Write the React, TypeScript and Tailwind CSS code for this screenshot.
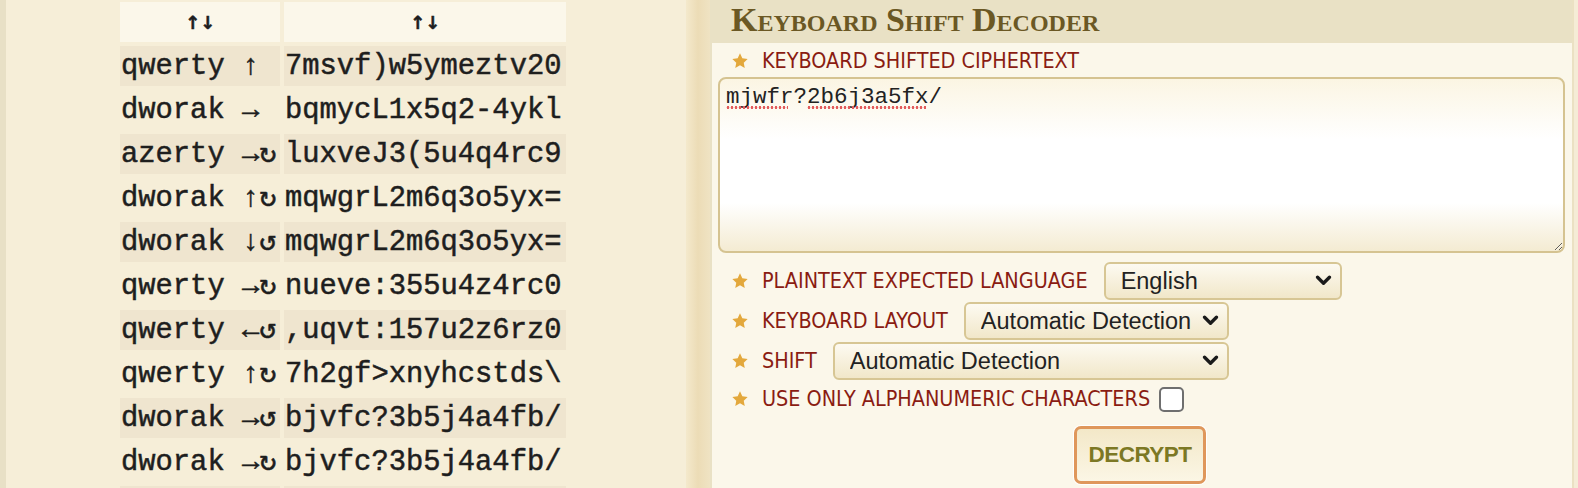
const rows: [string, string][] = [
  ["qwerty ↑", "7msvf)w5ymeztv20"],
  ["dworak →", "bqmycL1x5q2-4ykl"],
  ["azerty →↻", "luxveJ3(5u4q4rc9"],
  ["dworak ↑↻", "mqwgrL2m6q3o5yx="],
  ["dworak ↓↺", "mqwgrL2m6q3o5yx="],
  ["qwerty →↻", "nueve:355u4z4rc0"],
  ["qwerty ←↺", ",uqvt:157u2z6rz0"],
  ["qwerty ↑↻", "7h2gf>xnyhcstds\\"],
  ["dworak →↺", "bjvfc?3b5j4a4fb/"],
  ["dworak →↻", "bjvfc?3b5j4a4fb/"],
  ["", ""],
];

function Star() {
  return (
    <svg viewBox="0 0 24 24" className="w-[18px] h-[18px] shrink-0 blur-[0.4px]">
      <path
        d="M12 1.8l3.1 6.6 7.1.9-5.2 4.9 1.3 7.1L12 17.8l-6.3 3.5 1.3-7.1-5.2-4.9 7.1-.9z"
        fill="#e3a83c"
      />
    </svg>
  );
}

function Label({ children }: { children: React.ReactNode }) {
  return (
    <span className="font-['Liberation_Sans_Narrow','DejaVu_Sans_Condensed','Liberation_Sans',sans-serif] text-[21.4px] leading-none text-[#8a1c12] whitespace-nowrap">
      {children}
    </span>
  );
}

function Chevron() {
  return (
    <svg
      viewBox="0 0 18 12"
      className="pointer-events-none absolute right-[10px] top-[13px] w-[17px] h-[11px]"
      fill="none"
      stroke="#1a1a1a"
      strokeWidth={3.6}
      strokeLinecap="round"
      strokeLinejoin="round"
    >
      <polyline points="2.5,2.5 9,9 15.5,2.5" />
    </svg>
  );
}

function Select({ value, options, width }: { value: string; options: string[]; width: string }) {
  return (
    <div className={`relative ${width}`}>
      <select
        defaultValue={value}
        className="w-full h-[38px] appearance-none rounded-[6px] border-2 border-[#d7c694] bg-gradient-to-b from-[#fdfaf1] to-[#f1e7c9] pl-[15px] pr-[34px] font-['Liberation_Sans',Arial,sans-serif] text-[23.5px] text-[#222] outline-none"
      >
        {options.map((o) => (
          <option key={o}>{o}</option>
        ))}
      </select>
      <Chevron />
    </div>
  );
}

export default function App() {
  return (
    <div className="w-[1578px] h-[488px] overflow-hidden flex bg-[#f5edd6]">
      <div className="w-[6px] bg-[#e8e0c6]" />

      {/* results table */}
      <div className="w-[680px] bg-[#f6eed8] pl-[114px] pt-[2px]">
        <div className="grid grid-cols-[160px_282px] gap-[4px] font-['Liberation_Mono','DejaVu_Sans_Mono',monospace] text-[28.8px] text-[#1e1e1e] [-webkit-text-stroke:0.5px_#1e1e1e]">
          <div className="h-[40px] bg-[#fbf7ea] flex items-center justify-center font-['DejaVu_Sans',sans-serif] font-bold text-[18px]">
            ↑↓
          </div>
          <div className="h-[40px] bg-[#fbf7ea] flex items-center justify-center font-['DejaVu_Sans',sans-serif] font-bold text-[18px]">
            ↑↓
          </div>
          {rows.map(([layout, text], i) => (
            <div key={i} className="contents">
              <div
                className={`h-[40px] flex items-center pl-[1px] pt-[2px] whitespace-pre ${
                  i % 2 === 0 ? "bg-[#efe5cf]" : ""
                }`}
              >
                {layout}
              </div>
              <div
                className={`h-[40px] flex items-center pl-[1px] pt-[2px] whitespace-pre ${
                  i % 2 === 0 ? "bg-[#efe5cf]" : ""
                }`}
              >
                {text}
              </div>
            </div>
          ))}
        </div>
      </div>

      <div className="w-[24px] bg-gradient-to-r from-[#f4e9cc] via-[#ecdcb6] to-[#efe3c3]" />

      {/* decoder panel */}
      <div className="w-[862px] bg-[#e9e1c5] flex flex-col">
        <div className="h-[43px] shrink-0 pl-[21px]">
          <h1 className="font-['Liberation_Serif','Times_New_Roman',serif] font-bold text-[34px] leading-[40px] text-[#6b5824] [font-variant-caps:small-caps]">
            Keyboard Shift Decoder
          </h1>
        </div>

        <div className="flex-1 ml-[2px] bg-[#fbf7ea] flex flex-col">
          <div className="h-[34px] flex items-center gap-[13px] pl-[19px] pt-[2px]">
            <Star />
            <Label>KEYBOARD SHIFTED CIPHERTEXT</Label>
          </div>

          <div className="relative ml-[6px] mr-[7px] h-[176px]">
            <textarea
              defaultValue="mjwfr?2b6j3a5fx/"
              spellCheck={false}
              className="w-full h-full block rounded-[8px] border-2 border-[#d5c391] bg-[linear-gradient(to_bottom,#fbf5e3_0%,#ffffff_35%,#ffffff_72%,#f4ebd2_100%)] px-[6px] pt-[5px] font-['Liberation_Mono','DejaVu_Sans_Mono',monospace] text-[22.5px] leading-[26px] text-[#222] outline-none"
            />
            {/* spellcheck marks */}
            <div className="pointer-events-none absolute left-[8px] top-[29px] w-[62px] h-[3px] bg-[radial-gradient(circle,#e25c5c_1.2px,transparent_1.6px)] bg-[length:4px_3px]" />
            <div className="pointer-events-none absolute left-[89px] top-[29px] w-[119px] h-[3px] bg-[radial-gradient(circle,#e25c5c_1.2px,transparent_1.6px)] bg-[length:4px_3px]" />
          </div>

          <div className="mt-[9px] flex flex-col gap-[2px] pl-[19px]">
            <div className="h-[38px] flex items-center gap-[13px]">
              <Star />
              <Label>PLAINTEXT EXPECTED LANGUAGE</Label>
              <Select value="English" options={["English", "French", "German", "Spanish"]} width="ml-[3px] w-[238px]" />
            </div>
            <div className="h-[38px] flex items-center gap-[13px]">
              <Star />
              <Label>KEYBOARD LAYOUT</Label>
              <Select
                value="Automatic Detection"
                options={["Automatic Detection", "QWERTY", "AZERTY", "DVORAK"]}
                width="ml-[3px] w-[265px]"
              />
            </div>
            <div className="h-[38px] flex items-center gap-[13px]">
              <Star />
              <Label>SHIFT</Label>
              <Select
                value="Automatic Detection"
                options={["Automatic Detection", "Up", "Down", "Left", "Right"]}
                width="ml-[3px] w-[396px]"
              />
            </div>
            <div className="h-[34px] flex items-center gap-[13px]">
              <Star />
              <Label>USE ONLY ALPHANUMERIC CHARACTERS</Label>
              <input
                type="checkbox"
                className="-ml-[4px] w-[25px] h-[25px] appearance-none rounded-[5px] border-2 border-[#6f6f6f] bg-white"
              />
            </div>
          </div>

          <div className="mt-[10px] flex justify-center pr-[4px]">
            <button className="w-[132px] h-[58px] rounded-[7px] border-[3px] border-[#df975b] ring-1 ring-white bg-gradient-to-b from-[#f3e8c8] to-[#fbf6e5] font-['Liberation_Sans',Arial,sans-serif] font-bold text-[22.5px] tracking-[-0.5px] text-[#7c7824]">
              DECRYPT
            </button>
          </div>
        </div>
      </div>

      <div className="w-[2px] bg-[#ebe1c3]" />
      <div className="w-[4px] bg-[#f5ecd6]" />
    </div>
  );
}
